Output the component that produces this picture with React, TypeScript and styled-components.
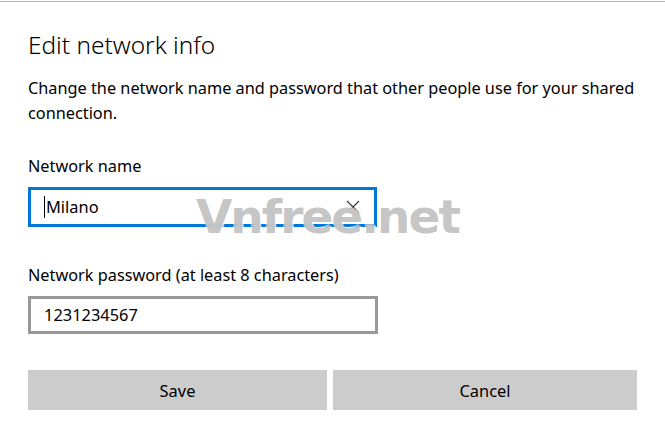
import {useState} from 'react'
import styled, {createGlobalStyle} from 'styled-components'

const GlobalStyle = createGlobalStyle`
  html, body {
    margin: 0;
    padding: 0;
    background: #ffffff;
  }
  body {
    font-family: 'Noto Sans', 'Open Sans', sans-serif;
    color: #000000;
  }
`

const Page = styled.div`
  position: relative;
  width: 665px;
  height: 435px;
  box-sizing: border-box;
  margin-top: 1px;
  border-top: 1px solid #b4b4b4;
  padding: 0 28px;
  overflow: hidden;
`

const Title = styled.h1`
  margin: 0;
  padding-top: 25px;
  font-size: 24.4px;
  font-weight: 300;
  line-height: 36px;
  color: #000;
`

const Description = styled.p`
  margin: 13px -6px 0 0;
  font-size: 16.3px;
  line-height: 25px;
  color: #000;
`

const Label = styled.div<{$top: number}>`
  margin-top: ${(p) => p.$top}px;
  font-size: 16.3px;
  line-height: 22px;
`

const Field = styled.div<{$focused?: boolean; $width: number}>`
  display: flex;
  align-items: center;
  box-sizing: border-box;
  width: ${(p) => p.$width}px;
  height: ${(p) => (p.$focused ? 40 : 38)}px;
  margin-top: 10px;
  padding: 0 12px 0 13px;
  border: 3px solid ${(p) => (p.$focused ? '#0078d7' : '#999999')};
  background: #fff;
`

const FieldText = styled.span`
  flex: 1;
  font-size: 16.4px;
  line-height: 22px;
  color: #000;
  white-space: nowrap;
`

const Caret = styled.span`
  display: inline-block;
  width: 1px;
  height: 22px;
  margin-right: 1px;
  vertical-align: -5px;
  background: #000;
`

const ClearButton = styled.button`
  display: flex;
  align-items: center;
  justify-content: center;
  width: 18px;
  height: 18px;
  padding: 0;
  border: none;
  background: transparent;
  color: #333;
`

const Buttons = styled.div`
  display: grid;
  grid-template-columns: 299px 1fr;
  gap: 6px;
  margin-top: 36px;
`

const Button = styled.button`
  height: 40px;
  border: none;
  background: #cccccc;
  font-family: 'Noto Sans', 'Open Sans', sans-serif;
  font-size: 16.4px;
  color: #000;
  padding: 0;
`

const Watermark = styled.div`
  position: absolute;
  left: 196px;
  top: 185px;
  font-family: 'DejaVu Sans', Verdana, sans-serif;
  font-weight: 700;
  font-size: 47px;
  line-height: 60px;
  letter-spacing: -2px;
  color: rgba(165, 165, 165, 0.65);
  text-shadow: 1px 1px 0 rgba(255, 255, 255, 0.85), -1px -1px 0 rgba(255, 255, 255, 0.6);
  pointer-events: none;
  user-select: none;
`

export default function App() {
  const [name] = useState('Milano')
  const [password] = useState('1231234567')

  return (
    <>
      <GlobalStyle />
      <Page>
        <Title>Edit network info</Title>
        <Description>
          Change the network name and password that other people use for your shared
          connection.
        </Description>
        <Label $top={29}>Network name</Label>
        <Field $focused $width={349}>
          <FieldText>
            <Caret />
            {name}
          </FieldText>
          <ClearButton aria-label="Clear">
            <svg width="14" height="14" viewBox="0 0 14 14">
              <path d="M1 1 L13 13 M13 1 L1 13" stroke="currentColor" strokeWidth="1.1" fill="none" />
            </svg>
          </ClearButton>
        </Field>
        <Label $top={37}>Network password (at least 8 characters)</Label>
        <Field $width={350}>
          <FieldText>{password}</FieldText>
        </Field>
        <Buttons>
          <Button>Save</Button>
          <Button>Cancel</Button>
        </Buttons>
        <Watermark>Vnfree.net</Watermark>
      </Page>
    </>
  )
}
